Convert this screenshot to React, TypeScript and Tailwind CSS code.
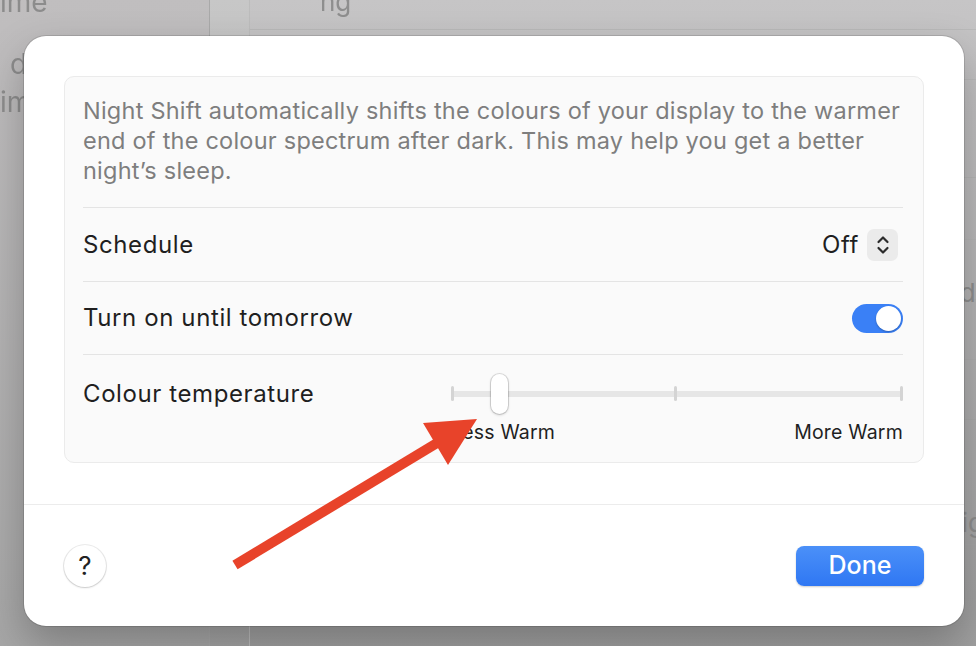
import React from 'react';

const Backdrop: React.FC = () => (
  <div className="absolute inset-0 flex">
    <div className="w-[210px] shrink-0 bg-gradient-to-b from-[#c0bebf] to-[#a6a6a6] border-r border-[#a9a9a9] flex flex-col text-[28px] leading-[40px] text-[#8c8c8c] blur-[0.4px]">
      <span className="-mt-[18px]">ime</span>
      <span className="mt-[22px] pl-[10px]">d</span>
      <span className="mt-[-2px]">im</span>
    </div>
    <div className="w-[40px] shrink-0 bg-gradient-to-b from-[#c7c7c7] to-[#a3a3a3] border-r border-[#bcbcbc]" />
    <div className="flex-1 bg-gradient-to-b from-[#c6c5c6] to-[#9f9f9f] flex flex-col text-[26px] text-[#8e8e8e]">
      <div className="h-[30px] border-b border-[#b9b9b9] pl-[70px] leading-[4px] blur-[0.3px]">ng</div>
      <div className="h-[50px] border-b border-[#b9b9b9]" />
      <div className="h-[98px] border-b border-[#b4b4b4]" />
      <div className="h-[62px] border-b border-[#b4b4b4]" />
      <div className="h-[60px] border-b border-[#b0b0b0]" />
      <div className="h-[60px] border-b border-[#adadad] flex justify-end items-start leading-none">
        <span className="-mr-[6px] -mt-[20px]">di</span>
      </div>
      <div className="h-[60px] border-b border-[#a9a9a9]" />
      <div className="h-[125px] border-b border-[#a6a6a6] flex justify-end items-end pb-[8px] leading-none">
        <span className="-mr-[8px]">ig</span>
      </div>
    </div>
  </div>
);

const Chevrons: React.FC = () => (
  <svg width="14" height="22" viewBox="0 0 14 22" fill="none" stroke="#2b2b2b" strokeWidth="2.2" strokeLinecap="round" strokeLinejoin="round">
    <path d="M2.5 8 L7 3.5 L11.5 8" />
    <path d="M2.5 14 L7 18.5 L11.5 14" />
  </svg>
);

const Arrow: React.FC = () => (
  <svg className="absolute inset-0 pointer-events-none" width="976" height="646" viewBox="0 0 976 646">
    <line x1="235" y1="565" x2="442" y2="440" stroke="#e8432a" strokeWidth="10" />
    <polygon points="477,419 423,423 448,465" fill="#e8432a" />
  </svg>
);

const App: React.FC = () => {
  return (
    <div className="relative w-[976px] h-[646px] overflow-hidden font-['Inter','Noto_Sans',sans-serif]">
      <Backdrop />

      <div className="absolute left-[24px] top-[36px] w-[940px] h-[590px] bg-white rounded-[22px] shadow-[0_0_0_1px_rgba(0,0,0,0.12),0_18px_40px_rgba(0,0,0,0.25)] flex flex-col">
        <div className="px-10 pt-10">
          <div className="h-[387px] bg-[#fafafa] border border-[#ebebeb] rounded-[10px] pl-[18px] pr-5 flex flex-col">
            <p className="pt-[19px] pb-[21px] text-[23.5px] tracking-[0.01em] leading-[30px] text-[#7e7e7e] border-b border-[#e4e4e4] whitespace-nowrap">
              Night Shift automatically shifts the colours of your display to the warmer
              <br />
              end of the colour spectrum after dark. This may help you get a better
              <br />
              night’s sleep.
            </p>

            <div className="h-[74px] flex items-center justify-between border-b border-[#e4e4e4] text-[24px] tracking-[0.025em] text-[#1f1f1f]">
              <span>Schedule</span>
              <div className="flex items-center gap-[8px] pr-[5px]">
                <span>Off</span>
                <div className="w-[31px] h-[32px] rounded-[7px] bg-[#ebebeb] flex items-center justify-center">
                  <Chevrons />
                </div>
              </div>
            </div>

            <div className="h-[73px] flex items-center justify-between border-b border-[#e4e4e4] text-[24px] tracking-[0.025em] text-[#1f1f1f]">
              <span>Turn on until tomorrow</span>
              <div className="w-[51px] h-[29px] rounded-full bg-[#3a80f6] flex items-center justify-end px-[2px]">
                <div className="w-[25px] h-[25px] rounded-full bg-white shadow-[0_1px_2px_rgba(0,0,0,0.25)]" />
              </div>
            </div>

            <div className="flex-1 flex items-start justify-between pt-[19px]">
              <span className="h-10 flex items-center text-[24px] tracking-[0.025em] text-[#1f1f1f]">Colour temperature</span>
              <div className="w-[452px] flex flex-col">
                <div className="relative h-10">
                  <div className="absolute left-0 right-0 top-[17px] h-[6px] rounded-full bg-[#e6e6e6]" />
                  <div className="absolute left-0 top-[12px] w-[3px] h-[15px] rounded-full bg-[#d4d4d4]" />
                  <div className="absolute left-[223px] top-[12px] w-[3px] h-[15px] rounded-full bg-[#d4d4d4]" />
                  <div className="absolute right-0 top-[12px] w-[3px] h-[15px] rounded-full bg-[#d4d4d4]" />
                  <div className="absolute left-[40px] top-0 w-[17px] h-10 rounded-full bg-white shadow-[0_0_0_1px_rgba(0,0,0,0.12),0_1px_3px_rgba(0,0,0,0.2)]" />
                </div>
                <div className="mt-[7px] flex justify-between text-[19.5px] tracking-[0.01em] leading-[22px] text-[#1f1f1f]">
                  <span>Less Warm</span>
                  <span>More Warm</span>
                </div>
              </div>
            </div>
          </div>
        </div>

        <div className="mt-[41px] border-t border-[#ececec] flex-1 flex items-center justify-between px-10">
          <button className="w-[42px] h-[42px] rounded-full bg-white shadow-[0_0_0_1px_rgba(0,0,0,0.08),0_1px_2px_rgba(0,0,0,0.15)] flex items-center justify-center text-[26px] text-[#222]">
            ?
          </button>
          <button className="w-[128px] h-[40px] rounded-[8px] bg-gradient-to-b from-[#4b90f8] to-[#2f77f3] shadow-[0_1px_2px_rgba(0,0,0,0.2)] text-white text-[25px] font-medium">
            Done
          </button>
        </div>
      </div>

      <Arrow />
    </div>
  );
};

export default App;
